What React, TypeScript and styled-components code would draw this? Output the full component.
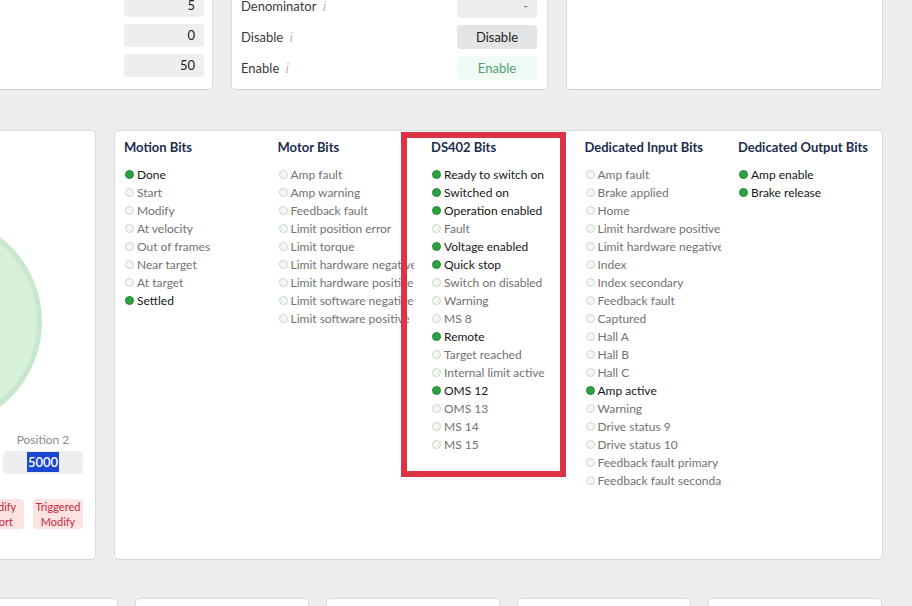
import React from "react";
import styled, { createGlobalStyle } from "styled-components";

const GlobalStyle = createGlobalStyle`
  html, body {
    margin: 0;
    padding: 0;
    background: #ededed;
    overflow: hidden;
    font-family: "Lato", "Noto Sans", sans-serif;
  }
`;

const Page = styled.div`
  display: flex;
  flex-direction: column;
  gap: 38px;
  width: 987px;
  margin: -60px 0 0 -104px;
`;

const Card = styled.div`
  background: #ffffff;
  border: 1px solid #dcdcdc;
  border-bottom-color: #d0d0d4;
  border-radius: 5px;
  box-sizing: border-box;
`;

/* top row */
const TopRow = styled.div`
  display: grid;
  grid-template-columns: repeat(3, 1fr);
  column-gap: 18px;
  margin-bottom: 2px;
`;

const TopCard = styled(Card)<{ $bottom?: number; $right?: number }>`
  height: 150px;
  display: flex;
  flex-direction: column;
  justify-content: flex-end;
  gap: 7px;
  padding: 0 ${(p) => p.$right ?? 10}px ${(p) => p.$bottom ?? 9}px 9px;
`;

const ValueBox = styled.div`
  align-self: flex-end;
  width: 80px;
  height: 23px;
  box-sizing: border-box;
  padding-right: 9px;
  background: #eeeeee;
  border-radius: 4px;
  font-size: 13px;
  line-height: 23px;
  text-align: right;
  color: #222;
`;

const FieldRow = styled.div`
  display: flex;
  align-items: center;
  justify-content: space-between;
  height: 24px;
`;

const FieldLabel = styled.span`
  font-size: 13px;
  color: #3a3a3a;
`;

const Info = styled.i`
  font-family: "Liberation Serif", serif;
  font-size: 14px;
  color: #b8b8b8;
  margin-left: 6px;
`;

const ActionButton = styled.div<{ $tone: "plain" | "muted" | "go" }>`
  width: 80px;
  height: 24px;
  box-sizing: border-box;
  border-radius: 4px;
  font-size: 13px;
  line-height: 24px;
  text-align: ${(p) => (p.$tone === "plain" ? "right" : "center")};
  padding: ${(p) => (p.$tone === "plain" ? "0 9px 0 0" : "0")};
  background: ${(p) =>
    p.$tone === "go" ? "#f2faf5" : p.$tone === "muted" ? "#e3e4e6" : "#eeeeee"};
  color: ${(p) =>
    p.$tone === "go" ? "#4d9f70" : p.$tone === "muted" ? "#1e1e1e" : "#777"};
`;

/* middle row */
const MiddleRow = styled.div`
  display: flex;
  gap: 18px;
  height: 430px;
`;

const LeftCard = styled(Card)`
  width: 200px;
  flex: none;
  display: flex;
  flex-direction: column;
  align-items: flex-end;
  padding-right: 12px;
  overflow: hidden;
`;

const Gauge = styled.div`
  flex: none;
  width: 214px;
  height: 214px;
  margin: 84px 41px 0 0;
  border-radius: 50%;
  box-sizing: border-box;
  border: 5px solid #c9e7cc;
  background: #d6f0d9;
`;

const PositionRow = styled.div`
  display: flex;
  gap: 8px;
  margin-top: 4px;
`;

const PositionField = styled.div`
  display: flex;
  flex-direction: column;
  align-items: center;
  width: 80px;
`;

const PositionLabel = styled.span`
  font-size: 12px;
  line-height: 14px;
  color: #8a8a8a;
  margin-bottom: 4px;
`;

const PositionBox = styled.div`
  width: 80px;
  height: 23px;
  background: #eeeeee;
  border-radius: 4px;
  text-align: center;
  font-size: 13px;
  font-weight: 600;
  line-height: 23px;
  color: #222;
`;

const Selected = styled.span`
  background: #1947d1;
  color: #ffffff;
  padding: 2px 1px;
`;

const TriggerRow = styled.div`
  display: flex;
  gap: 9px;
  margin-top: 25px;
`;

const TriggerButton = styled.div`
  width: 50px;
  height: 30px;
  border-radius: 4px;
  background: #fde2e2;
  color: #c8283a;
  font-size: 11px;
  line-height: 15px;
  text-align: center;
`;

const MainCard = styled(Card)`
  flex: 1;
  position: relative;
  display: grid;
  grid-template-columns: repeat(5, 136px);
  column-gap: 17.5px;
  align-content: start;
  padding: 7px 8px 0 9px;
`;

const Column = styled.div`
  display: flex;
  flex-direction: column;
  min-width: 0;
  overflow: hidden;
`;

const ColumnTitle = styled.div`
  font-size: 13px;
  font-weight: 700;
  line-height: 18px;
  color: #1d2c4f;
  white-space: nowrap;
  margin-bottom: 9px;
`;

const Bit = styled.div<{ $on: boolean }>`
  display: flex;
  align-items: center;
  gap: 3px;
  height: 18px;
  font-size: 12px;
  white-space: nowrap;
  color: ${(p) => (p.$on ? "#161616" : "#727272")};
`;

const Dot = styled.span<{ $on: boolean }>`
  flex: none;
  width: 9px;
  height: 9px;
  margin-left: 1px;
  border-radius: 50%;
  box-sizing: border-box;
  background: ${(p) => (p.$on ? "#2ea23f" : "#f3f8f3")};
  border: 1px solid ${(p) => (p.$on ? "#23873a" : "#c7d8c8")};
`;

const Highlight = styled.div`
  position: absolute;
  left: 286px;
  top: 1px;
  width: 165px;
  height: 345px;
  box-sizing: border-box;
  border: 6px solid #dc3446;
  pointer-events: none;
`;

/* bottom row */
const BottomRow = styled.div`
  display: flex;
  justify-content: flex-end;
  gap: 17px;
  padding-right: 1px;
`;

const SmallCard = styled(Card)`
  width: 174px;
  height: 100px;
  flex: none;
`;

type BitGroup = { title: string; bits: [string, boolean][] };

const groups: BitGroup[] = [
  {
    title: "Motion Bits",
    bits: [
      ["Done", true],
      ["Start", false],
      ["Modify", false],
      ["At velocity", false],
      ["Out of frames", false],
      ["Near target", false],
      ["At target", false],
      ["Settled", true],
    ],
  },
  {
    title: "Motor Bits",
    bits: [
      ["Amp fault", false],
      ["Amp warning", false],
      ["Feedback fault", false],
      ["Limit position error", false],
      ["Limit torque", false],
      ["Limit hardware negative", false],
      ["Limit hardware positive", false],
      ["Limit software negative", false],
      ["Limit software positive", false],
    ],
  },
  {
    title: "DS402 Bits",
    bits: [
      ["Ready to switch on", true],
      ["Switched on", true],
      ["Operation enabled", true],
      ["Fault", false],
      ["Voltage enabled", true],
      ["Quick stop", true],
      ["Switch on disabled", false],
      ["Warning", false],
      ["MS 8", false],
      ["Remote", true],
      ["Target reached", false],
      ["Internal limit active", false],
      ["OMS 12", true],
      ["OMS 13", false],
      ["MS 14", false],
      ["MS 15", false],
    ],
  },
  {
    title: "Dedicated Input Bits",
    bits: [
      ["Amp fault", false],
      ["Brake applied", false],
      ["Home", false],
      ["Limit hardware positive", false],
      ["Limit hardware negative", false],
      ["Index", false],
      ["Index secondary", false],
      ["Feedback fault", false],
      ["Captured", false],
      ["Hall A", false],
      ["Hall B", false],
      ["Hall C", false],
      ["Amp active", true],
      ["Warning", false],
      ["Drive status 9", false],
      ["Drive status 10", false],
      ["Feedback fault primary", false],
      ["Feedback fault secondary", false],
    ],
  },
  {
    title: "Dedicated Output Bits",
    bits: [
      ["Amp enable", true],
      ["Brake release", true],
    ],
  },
];

export default function App() {
  return (
    <>
      <GlobalStyle />
      <Page>
        <TopRow>
          <TopCard $bottom={12} $right={8}>
            <ValueBox>5</ValueBox>
            <ValueBox>0</ValueBox>
            <ValueBox>50</ValueBox>
          </TopCard>
          <TopCard>
            <FieldRow>
              <FieldLabel>
                Denominator<Info>i</Info>
              </FieldLabel>
              <ActionButton $tone="plain">-</ActionButton>
            </FieldRow>
            <FieldRow>
              <FieldLabel>
                Disable<Info>i</Info>
              </FieldLabel>
              <ActionButton $tone="muted">Disable</ActionButton>
            </FieldRow>
            <FieldRow>
              <FieldLabel>
                Enable<Info>i</Info>
              </FieldLabel>
              <ActionButton $tone="go">Enable</ActionButton>
            </FieldRow>
          </TopCard>
          <TopCard />
        </TopRow>

        <MiddleRow>
          <LeftCard>
            <Gauge />
            <PositionRow>
              <PositionField>
                <PositionLabel>Position 1</PositionLabel>
                <PositionBox>0</PositionBox>
              </PositionField>
              <PositionField>
                <PositionLabel>Position 2</PositionLabel>
                <PositionBox>
                  <Selected>5000</Selected>
                </PositionBox>
              </PositionField>
            </PositionRow>
            <TriggerRow>
              <TriggerButton>Modify Abort</TriggerButton>
              <TriggerButton>Triggered Modify</TriggerButton>
            </TriggerRow>
          </LeftCard>

          <MainCard>
            {groups.map((g) => (
              <Column key={g.title}>
                <ColumnTitle>{g.title}</ColumnTitle>
                {g.bits.map(([name, on]) => (
                  <Bit key={name} $on={on}>
                    <Dot $on={on} />
                    {name}
                  </Bit>
                ))}
              </Column>
            ))}
            <Highlight />
          </MainCard>
        </MiddleRow>

        <BottomRow>
          <SmallCard />
          <SmallCard />
          <SmallCard />
          <SmallCard />
          <SmallCard />
        </BottomRow>
      </Page>
    </>
  );
}
